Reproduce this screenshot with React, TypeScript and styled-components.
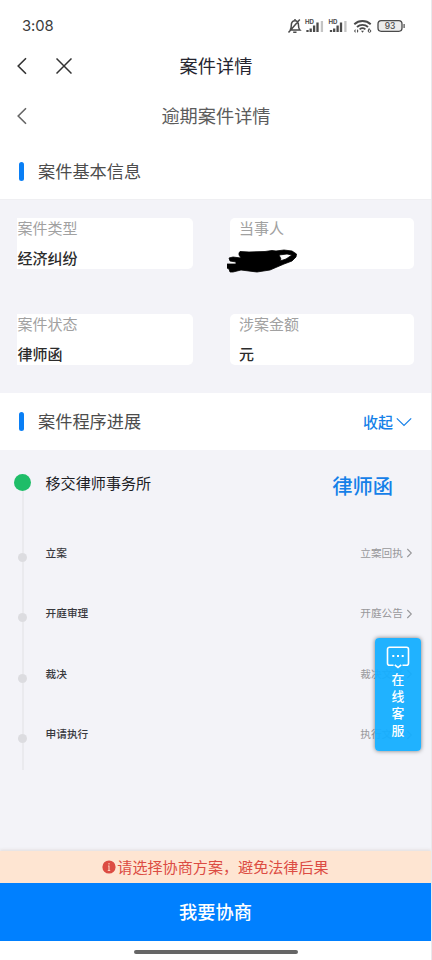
import React from 'react';
import styled, { createGlobalStyle } from 'styled-components';

const GlobalStyle = createGlobalStyle`
  * { box-sizing: border-box; }
  body { margin: 0; background: #fff; }
`;

const Screen = styled.div`
  position: relative;
  display: flex;
  flex-direction: column;
  width: 432px;
  height: 960px;
  overflow: hidden;
  background: #fff;
  border-right: 1px solid #e9e9ec;
  font-family: 'Noto Sans CJK SC', sans-serif;
  color: #2b2b2f;
  line-height: 1;
  white-space: nowrap;
`;

const StatusBar = styled.div`
  display: flex;
  align-items: center;
  justify-content: space-between;
  height: 40px;
  padding: 12px 25px 0 22px;
`;

const Clock = styled.span`
  font: 400 14.8px/20px Inter, sans-serif;
  letter-spacing: -0.1px;
  color: #3c3c3c;
`;

const NavBar = styled.div<{ $height: number }>`
  display: grid;
  grid-template-columns: 100px 1fr 99px;
  align-items: center;
  height: ${(p) => p.$height}px;
`;

const NavIcons = styled.div`
  display: flex;
  align-items: center;
  gap: 28px;
  padding-left: 16px;
`;

const Title = styled.h1<{ $muted?: boolean }>`
  margin: 0;
  padding-bottom: 2px;
  text-align: center;
  font-size: 18.2px;
  font-weight: 400;
  line-height: 26px;
  color: ${(p) => (p.$muted ? '#5c5c5c' : '#25252f')};
`;

const SectionHead = styled.div<{ $height: number; $top?: number }>`
  display: flex;
  flex: none;
  align-items: center;
  height: ${(p) => p.$height}px;
  padding: ${(p) => p.$top ?? 0}px 19px 0;
`;

const Marker = styled.i`
  width: 5px;
  height: 19px;
  margin-right: 14px;
  border-radius: 2.5px;
  background: #0a7ff5;
`;

const SectionTitle = styled.h2`
  flex: 1;
  margin: 0;
  padding-bottom: 1px;
  font-size: 17.2px;
  font-weight: 400;
  line-height: 24px;
  color: #4c4c4c;
`;

const Collapse = styled.button`
  display: flex;
  align-items: center;
  gap: 3px;
  padding: 0;
  border: 0;
  background: none;
  font: 500 15px/20px 'Noto Sans CJK SC', sans-serif;
  color: #1580e8;
`;

const InfoGrid = styled.div`
  display: grid;
  flex: none;
  grid-template-columns: 176px 184px;
  grid-auto-rows: 51px;
  column-gap: 37px;
  row-gap: 45.5px;
  height: 194px;
  padding: 17.5px 17px 0;
  background: #f3f3f8;
  border-top: 1px solid #efeff2;
`;

const InfoCard = styled.div<{ $inset?: boolean }>`
  position: relative;
  padding: 0 0 0 ${(p) => (p.$inset ? 9 : 0.5)}px;
  border-radius: ${(p) => (p.$inset ? '5px' : '0 5px 5px 0')};
  background: #fff;
  font-size: 15px;
`;

const Label = styled.div`
  height: 19px;
  line-height: 19px;
  color: #a1a1a1;
`;

const Value = styled.div`
  margin-top: 11px;
  font-weight: 500;
  line-height: 20px;
  color: #2c2c2c;
`;

const Scribble = styled.svg`
  position: absolute;
  left: -3px;
  top: 29px;
`;

const Progress = styled.div`
  flex: 1;
  padding: 23.5px 19px 0 12px;
  background: #f3f3f8;
`;

const Step = styled.div<{ $height: number }>`
  display: grid;
  grid-template-columns: 21px 1fr auto;
  column-gap: 12.5px;
  height: ${(p) => p.$height}px;
`;

const Rail = styled.div`
  display: flex;
  flex-direction: column;
  align-items: center;
`;

const Dot = styled.i<{ $active?: boolean }>`
  flex: none;
  width: ${(p) => (p.$active ? 17.5 : 9)}px;
  height: ${(p) => (p.$active ? 17.5 : 9)}px;
  border-radius: 50%;
  background: ${(p) => (p.$active ? '#1fbd68' : '#dcdce0')};
`;

const Line = styled.i`
  flex: 1;
  width: 2px;
  margin-left: 1px;
  background: #eaeaee;
`;

const StepName = styled.span<{ $active?: boolean }>`
  height: 18px;
  margin-top: ${(p) => (p.$active ? -1 : -9)}px;
  font-size: ${(p) => (p.$active ? 15.1 : 10.7)}px;
  font-weight: ${(p) => (p.$active ? 400 : 500)};
  line-height: 18px;
  color: ${(p) => (p.$active ? '#202025' : '#38383d')};
`;

const StepState = styled.span`
  margin: -1px 19px 0 0;
  height: 26px;
  font-size: 20.3px;
  font-weight: 500;
  line-height: 24px;
  color: #1580e8;
`;

const StepLink = styled.span`
  display: flex;
  align-items: center;
  gap: 3px;
  height: 18px;
  margin: -8.5px -1px 0 0;
  font-size: 10.7px;
  color: #98989b;
`;

const Service = styled.button`
  position: absolute;
  right: 10px;
  top: 637.5px;
  display: flex;
  flex-direction: column;
  align-items: center;
  width: 46px;
  height: 113px;
  padding: 7px 0 0;
  border: 0;
  border-radius: 4px;
  background: rgba(20, 174, 255, 0.95);
  box-shadow: 0 0 4px rgba(0, 0, 0, 0.5);
  color: #fff;
`;

const ServiceText = styled.span`
  width: 14px;
  margin-top: 1px;
  font: 500 12.8px/17.3px 'Noto Sans CJK SC', sans-serif;
  white-space: normal;
  word-break: break-all;
`;

const Warning = styled.div`
  display: flex;
  flex: none;
  align-items: center;
  justify-content: center;
  gap: 1px;
  height: 31.5px;
  background: #fee5d2;
  box-shadow: 0 -1px 3px rgba(120, 90, 60, 0.15);
  color: #dc4c43;
`;

const WarningText = styled.span`
  padding-bottom: 1px;
  font-size: 15.1px;
  line-height: 20px;
`;

const Primary = styled.button`
  flex: none;
  height: 58.5px;
  padding: 0 0 2px;
  border: 0;
  background: #0080ff;
  font: 500 18.2px/26px 'Noto Sans CJK SC', sans-serif;
  color: #fff;
`;

const HomeArea = styled.div`
  display: flex;
  flex: none;
  justify-content: center;
  height: 19px;
  padding-top: 8.5px;
`;

const HomeBar = styled.i`
  width: 164px;
  height: 4px;
  border-radius: 2px;
  background: #666;
`;

const BackIcon = ({ color }: { color: string }) => (
  <svg width="12" height="18" viewBox="0 0 12 18" fill="none" stroke={color} strokeWidth="1.6">
    <path d="M10 1.2 2.2 9 10 16.8" />
  </svg>
);

const CloseIcon = () => (
  <svg width="16" height="16" viewBox="0 0 16 16" stroke="#333" strokeWidth="1.5">
    <path d="M.5.5l15 15M15.5.5l-15 15" />
  </svg>
);

const Signal = ({ x }: { x: number }) => (
  <g transform={`translate(${x} 0)`}>
    <text x="-0.5" y="5.5" fontFamily="Inter, sans-serif" fontSize="5.6" fontWeight="700" textLength="9" lengthAdjust="spacingAndGlyphs">HD</text>
    <path d="M2 12v2M5.2 10.5V14M8.6 7.5V14M12 4.5V14" stroke="#4a4a4a" strokeWidth="2.3" />
    <path d="M16.4 3v11" stroke="#c4c4c4" strokeWidth="2.3" />
  </g>
);

const StatusIcons = () => (
  <svg width="119" height="16" viewBox="0 0 119 16" fill="#4a4a4a">
    <g fill="none" stroke="#4a4a4a" strokeWidth="1.5">
      <path d="M3 12c1-1 1.3-2 1.3-4.5 0-3 1.3-4.8 3.7-4.8s3.5 1.8 3.5 4.8c0 2.5.4 3.5 1.4 4.5H3M6.2 14.2h3.3M1.5 14.5 12.8 1.5M8 1v2" />
      <path d="M67.3 6.3a12 12 0 0 1 16.4 0" strokeWidth="1.9" />
      <path d="M70 9a8.2 8.2 0 0 1 11 0" strokeWidth="1.9" />
      <path d="M72.6 11.4a4.5 4.5 0 0 1 5.8 0" strokeWidth="1.7" />
      <circle cx="82.5" cy="13" r="1.3" strokeWidth="1" />
      <path d="M82.2 10.3 81.3 12.8" strokeWidth="1" />
    </g>
    <path d="M74 12.8h3l-1.5 2zM67 13l1.5-2v4zM71.5 13 70 15v-4z" />
    <Signal x={18.5} />
    <Signal x={42} />
    <rect x="91" y="2.7" width="24" height="10.6" rx="3.2" fill="#ececec" stroke="#4a4a4a" strokeWidth="1.3" />
    <path d="M116.5 6h1.2v4h-1.2z" />
    <text x="103" y="11" textAnchor="middle" fontFamily="Inter, sans-serif" fontSize="8.5" fontWeight="500">93</text>
  </svg>
);

const ChevronDown = () => (
  <svg width="16" height="10" viewBox="0 0 16 10" fill="none" stroke="#1580e8" strokeWidth="1.2">
    <path d="M.8 1.3 8 8.5l7.2-7.2" />
  </svg>
);

const ChevronRight = () => (
  <svg width="7" height="10" viewBox="0 0 7 10" fill="none" stroke="#98989b" strokeWidth="1.1">
    <path d="m1.3 1 4 4-4 4" />
  </svg>
);

const ChatIcon = () => (
  <svg width="24" height="24" viewBox="0 0 24 24" fill="none" stroke="#fff" strokeWidth="1.6">
    <path d="M7.5 20.3h-4a2 2 0 0 1-2-2V4.2a2 2 0 0 1 2-2h17a2 2 0 0 1 2 2v14.1a2 2 0 0 1-2 2h-4M8.8 19.8l3.2 2.7 3.2-2.7" />
    <path d="M6.3 11h2M11 11h2M15.7 11h2" strokeWidth="2" />
  </svg>
);

const AlertIcon = () => (
  <svg width="14" height="14" viewBox="0 0 14 14">
    <circle cx="7" cy="7" r="6.6" fill="#dc4c43" />
    <path d="M7 3v1.5M6 6h1v4.5M5.8 10.5h2.4" fill="none" stroke="#fbd0bd" strokeWidth="1.1" />
  </svg>
);

const steps = [
  { name: '立案', link: '立案回执', height: 60.5 },
  { name: '开庭审理', link: '开庭公告', height: 60.5 },
  { name: '裁决', link: '裁决文书', height: 60.5 },
  { name: '申请执行', link: '执行文书', height: 36 },
];

export default function App() {
  return (
    <Screen>
      <GlobalStyle />
      <StatusBar>
        <Clock>3:08</Clock>
        <StatusIcons />
      </StatusBar>
      <NavBar $height={51}>
        <NavIcons>
          <BackIcon color="#333" />
          <CloseIcon />
        </NavIcons>
        <Title>案件详情</Title>
      </NavBar>
      <NavBar $height={50}>
        <NavIcons>
          <BackIcon color="#666" />
        </NavIcons>
        <Title $muted>逾期案件详情</Title>
      </NavBar>
      <SectionHead $height={58} $top={3}>
        <Marker />
        <SectionTitle>案件基本信息</SectionTitle>
      </SectionHead>
      <InfoGrid>
        <InfoCard>
          <Label>案件类型</Label>
          <Value>经济纠纷</Value>
        </InfoCard>
        <InfoCard $inset>
          <Label>当事人</Label>
          <Scribble width="72" height="28" viewBox="0 0 72 28">
            <path
              d="M12 6 13 4.5 22 5 38 4.5 45 3.5 49 4 57 3 65 4 69.500 7 69 10 65 14 57 17 50 20 43 23 30 25 14 23 6 25 3 25 2 22 0 21 0 17 9 17 9 15 3 14 2 11 6 10 14 11 12 8Z M52 8 54 12 53 14 59 12 65 8 60 7Z"
              fill="#000"
              fillRule="evenodd"
              stroke="#000"
              strokeWidth="0.8"
              strokeLinejoin="round"
            />
          </Scribble>
        </InfoCard>
        <InfoCard>
          <Label>案件状态</Label>
          <Value>律师函</Value>
        </InfoCard>
        <InfoCard $inset>
          <Label>涉案金额</Label>
          <Value>元</Value>
        </InfoCard>
      </InfoGrid>
      <SectionHead $height={57}>
        <Marker />
        <SectionTitle>案件程序进展</SectionTitle>
        <Collapse>
          收起
          <ChevronDown />
        </Collapse>
      </SectionHead>
      <Progress>
        <Step $height={79}>
          <Rail>
            <Dot $active />
            <Line />
          </Rail>
          <StepName $active>移交律师事务所</StepName>
          <StepState>律师函</StepState>
        </Step>
        {steps.map((step) => (
          <Step key={step.name} $height={step.height}>
            <Rail>
              <Dot />
              <Line />
            </Rail>
            <StepName>{step.name}</StepName>
            <StepLink>
              {step.link}
              <ChevronRight />
            </StepLink>
          </Step>
        ))}
      </Progress>
      <Warning>
        <AlertIcon />
        <WarningText>请选择协商方案，避免法律后果</WarningText>
      </Warning>
      <Primary>我要协商</Primary>
      <HomeArea>
        <HomeBar />
      </HomeArea>
      <Service>
        <ChatIcon />
        <ServiceText>在线客服</ServiceText>
      </Service>
    </Screen>
  );
}
